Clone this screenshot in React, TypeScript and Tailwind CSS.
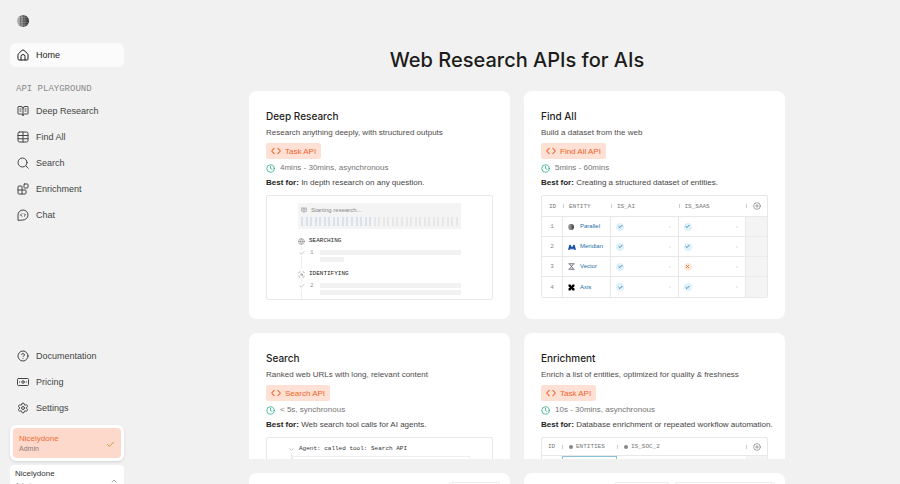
import type { ReactNode } from "react";
import {
  Blocks,
  BookOpenText,
  Check,
  ChevronDown,
  ChevronUp,
  CircleHelp,
  CirclePlus,
  Clock,
  Globe,
  ScanSearch,
  Settings,
  X,
} from "lucide-react";

const sans = "font-['Liberation_Sans',Arial,sans-serif]";
const mono = "font-['Liberation_Mono','Courier_New',monospace]";
const display = "font-['Inter','Liberation_Sans',sans-serif]";

// ── Icons ──

interface SvgProps {
  children: ReactNode;
  size?: number;
}

function Svg({ children, size = 12 }: SvgProps) {
  return (
    <svg
      width={size}
      height={size}
      viewBox="0 0 24 24"
      fill="none"
      stroke="currentColor"
      strokeWidth={2}
      strokeLinecap="round"
      strokeLinejoin="round"
      aria-hidden="true"
      className="shrink-0"
    >
      {children}
    </svg>
  );
}

function HomeIcon() {
  return (
    <Svg>
      <path d="M2 11.500a3 3 0 0 1 1-2.200l7-6.500a3 3 0 0 1 4 0l7 6.500a3 3 0 0 1 1 2.200V20a2 2 0 0 1-2 2H4a2 2 0 0 1-2-2z" />
      <path d="M8 22v-7a4 4 0 0 1 8 0v7" />
    </Svg>
  );
}

function TableIcon() {
  return (
    <Svg>
      <rect x="2" y="2" width="20" height="20" rx="3" />
      <path d="M2 9h20M2 15.500h20M12 2v20" />
    </Svg>
  );
}

function SearchIcon() {
  return (
    <Svg>
      <circle cx="11" cy="11" r="9" />
      <path d="m18 18 4.500 4.500" />
    </Svg>
  );
}

function ChatIcon() {
  return (
    <Svg>
      <path d="M2 22V12a10 10 0 1 1 10 10z" />
      <path d="m9.500 9.500-2.500 2.500 2.500 2.500M14.500 9.500l2.500 2.500-2.500 2.500" />
    </Svg>
  );
}

function PricingIcon() {
  return (
    <Svg>
      <rect x="1" y="5" width="22" height="14" rx="2" />
      <circle cx="12" cy="12" r="2.500" />
      <path d="M5 12h.5M18.500 12h.5" />
    </Svg>
  );
}

function CodeIcon() {
  return (
    <Svg size={10}>
      <path d="m7.500 5.500-6 6.500 6 6.500M16.500 5.500l6 6.500-6 6.500" strokeWidth={2.5} />
    </Svg>
  );
}

function Logo({ size = 12 }: { size?: number }) {
  return (
    <svg width={size} height={size} viewBox="0 0 24 24" aria-hidden="true" className="shrink-0">
      <defs>
        <linearGradient id="globe">
          <stop offset="0" stopColor="#b5b5b5" />
          <stop offset="0.5" stopColor="#7d7d7d" />
          <stop offset="1" stopColor="#222" />
        </linearGradient>
      </defs>
      <circle cx="12" cy="12" r="12" fill="url(#globe)" />
      <path d="M7 2v20M13 0v24M18 2v20" stroke="#444" strokeWidth="1" />
      <path d="M3 5h18M1 10h22M1 15h22M4 20h16" stroke="#d0d0d0" strokeWidth="1" opacity="0.5" />
    </svg>
  );
}

function MeridianLogo() {
  return (
    <svg width="8" height="8" viewBox="0 0 14 14" fill="#1d4fa8" aria-hidden="true">
      <path d="M0 12 2.500 3h2L7 8l2.500-5h2L14 12h-4L9 9l-2 3-2-3-1 3z" />
    </svg>
  );
}

function VectorLogo() {
  return (
    <svg width="7" height="7" viewBox="0 0 14 14" fill="none" stroke="#445" strokeWidth="1.500" aria-hidden="true">
      <path d="M1 1.500h12M1 12.500h12M3 2l8 10M11 2 3 12" />
    </svg>
  );
}

function AxisLogo() {
  return (
    <svg width="7" height="7" viewBox="0 0 14 14" fill="#000" aria-hidden="true">
      <path d="M1 1h4l2 3 2-3h4v4l-3 2 3 2v4H9l-2-3-2 3H1V9l3-2-3-2z" />
    </svg>
  );
}

// ── Sidebar ──

interface NavItemProps {
  icon: ReactNode;
  label: string;
  active?: boolean;
}

function NavItem({ icon, label, active }: NavItemProps) {
  return (
    <a
      href="#"
      className={`flex h-6 items-center gap-[7px] rounded-md px-[7px] text-[9px] ${
        active ? "bg-[#fbfbfb] text-[#1d1c1a]" : "text-[#444]"
      }`}
    >
      {icon}
      <span className="pt-0.5">{label}</span>
    </a>
  );
}

function Sidebar() {
  return (
    <aside className="flex h-full w-[134px] shrink-0 flex-col px-2.5">
      <a href="#" aria-label="Home page" className="mt-[15px] ml-[7px] self-start">
        <Logo />
      </a>

      <nav className="mt-4 flex flex-col gap-0.5">
        <NavItem icon={<HomeIcon />} label="Home" active />
        <h2 className={`mt-3.5 mb-0.5 px-[6px] text-[9px] leading-3 text-[#8a8a8a] ${mono}`}>
          API PLAYGROUND
        </h2>
        <NavItem icon={<BookOpenText size={12} />} label="Deep Research" />
        <NavItem icon={<TableIcon />} label="Find All" />
        <NavItem icon={<SearchIcon />} label="Search" />
        <NavItem icon={<Blocks size={12} />} label="Enrichment" />
        <NavItem icon={<ChatIcon />} label="Chat" />
      </nav>

      <nav className="mt-auto flex flex-col gap-0.5">
        <NavItem icon={<CircleHelp size={12} />} label="Documentation" />
        <NavItem icon={<PricingIcon />} label="Pricing" />
        <NavItem icon={<Settings size={12} />} label="Settings" />
      </nav>

      <div className="mt-[5px] rounded-md bg-white p-[3px] shadow">
        <button
          type="button"
          className="flex w-full items-center justify-between rounded bg-[#fdd9cc] px-1.5 pt-1.5 pb-1 text-left"
        >
          <span className="flex flex-col">
            <span className="text-[8px] leading-[10px] text-[#ee6b33]">Nicelydone</span>
            <span className="text-[7px] leading-[10px] text-[#8d7b76]">Admin</span>
          </span>
          <Check size={9} strokeWidth={2.5} className="text-[#c98a2e]" />
        </button>
      </div>

      {/* account switcher runs past the bottom edge */}
      <button
        type="button"
        className="mt-1 -mb-[13px] flex shrink-0 items-center justify-between rounded bg-white px-[5px] py-1 text-left"
      >
        <span className="flex flex-col">
          <span className="text-[8px] leading-[10px] text-[#333]">Nicelydone</span>
          <span className="text-[7px] leading-[14px] text-[#8a8a8a]">Admin</span>
        </span>
        <ChevronUp size={8} className="mr-px text-[#777]" />
      </button>
    </aside>
  );
}

// ── Cards ──

interface ApiCardProps {
  title: string;
  description: string;
  api: string;
  time: string;
  bestFor: string;
  clipped?: boolean;
  children: ReactNode;
}

function ApiCard({ title, description, api, time, bestFor, clipped, children }: ApiCardProps) {
  return (
    <article
      className={`bg-white px-[17px] pt-4 ${
        clipped ? "max-h-[126px] overflow-hidden rounded-t-lg" : "rounded-lg pb-[19px]"
      }`}
    >
      <h2 className={`text-[10px] leading-[18px] font-medium text-[#1d1c1a] ${display}`}>{title}</h2>
      <p className="mt-0.5 text-[8px] leading-3 text-[#504c4b]">{description}</p>
      <a
        href="#"
        className="mt-1 flex h-4 w-fit items-center gap-1 rounded-xs bg-[#fee0d5] px-[5px] text-[8px] text-[#f0652b]"
      >
        <CodeIcon />
        <span className="pt-px">{api}</span>
      </a>
      <p className="mt-[3px] flex items-center gap-[5px] text-[8px] leading-3 text-[#757575]">
        <Clock size={9} className="text-[#1fa97c]" />
        {time}
      </p>
      <p className="mt-[3px] text-[8px] leading-3 whitespace-nowrap text-[#454545]">
        <b className="text-[#1d1c1a]">Best for:</b> {bestFor}
      </p>
      <div className="mt-1.5 max-h-[105px] overflow-hidden rounded-xs border border-[#e8e8e8]">
        {children}
      </div>
    </article>
  );
}

interface ResearchStepProps {
  icon: ReactNode;
  label: string;
  num: number;
  short?: boolean;
}

function ResearchStep({ icon, label, num, short }: ResearchStepProps) {
  return (
    <div className="h-[33px]">
      <div className={`flex items-center gap-1 text-[6px] leading-[10px] text-[#222] ${mono}`}>
        <span className="text-[#888]">{icon}</span>
        {label}
      </div>
      <div className="ml-[3px] flex border-l border-[#eee] pt-1 pb-1.5">
        <Check size={6} className="-ml-[3px] bg-white text-[#888]" />
        <span className={`ml-[5px] w-2.5 text-[6px] leading-[6px] text-[#999] ${mono}`}>{num}</span>
        <div className="flex flex-1 flex-col gap-0.5">
          <div className="h-[5px] bg-[#f2f2f2]" />
          <div className={`h-[5px] bg-[#f2f2f2] ${short ? "w-1/6" : ""}`} />
        </div>
      </div>
    </div>
  );
}

function ResearchPreview() {
  return (
    <div className="px-[31px] pt-[7px] pb-px">
      <div className="bg-[#f4f4f4] p-[3px]">
        <div className="flex items-center gap-1 text-[6px] leading-2 text-[#888]">
          <BookOpenText size={6} />
          Starting research...
        </div>
        <div className="mt-[3px] flex h-[9px] justify-between">
          {Array.from({ length: 35 }, (_, i) => (
            <span key={i} className={`w-0.5 ${i < 16 ? "bg-[#d9e2ea]" : "bg-[#e7e7e7]"}`} />
          ))}
        </div>
      </div>
      <div className="mt-[7px]">
        <ResearchStep icon={<Globe size={7} />} label="SEARCHING" num={1} short />
        <ResearchStep icon={<ScanSearch size={7} />} label="IDENTIFYING" num={2} />
      </div>
    </div>
  );
}

const entities = [
  { id: 1, name: "Parallel", logo: <Logo size={6} />, ai: true, saas: true },
  { id: 2, name: "Meridian", logo: <MeridianLogo />, ai: true, saas: true },
  { id: 3, name: "Vector", logo: <VectorLogo />, ai: true, saas: false },
  { id: 4, name: "Axis", logo: <AxisLogo />, ai: true, saas: true },
];

function Flag({ ok }: { ok: boolean }) {
  return (
    <div className="flex items-center justify-between pr-[7px] pl-[5px]">
      <span
        className={`flex size-2 items-center justify-center rounded-full ${
          ok ? "bg-[#dff1fb] text-[#1f6f9f]" : "bg-[#fdeadf] text-[#e2672b]"
        }`}
      >
        {ok ? <Check size={5} strokeWidth={4} /> : <X size={5} strokeWidth={4} />}
      </span>
      <span className="size-0.5 bg-[#ececec]" />
    </div>
  );
}

function FindAllPreview() {
  const head = "border-b border-[#e8e8e8] p-0 text-left font-normal";
  const headLabel = "flex h-1 items-center border-l border-[#ccc] pl-[5px]";
  const cell = "border-r border-b border-[#e8e8e8] p-0 group-last:border-b-0";

  return (
    <table className="w-full table-fixed border-separate border-spacing-0 text-[6px]">
      <colgroup>
        <col className="w-[21px]" />
        <col className="w-12" />
        <col />
        <col />
        <col className="w-[21px]" />
      </colgroup>
      <thead className={`text-[#777] ${mono}`}>
        <tr className="h-[21px]">
          <th className={head}>
            <span className="flex h-1 items-center pl-[7px]">ID</span>
          </th>
          <th className={head}>
            <span className={headLabel}>ENTITY</span>
          </th>
          <th className={head}>
            <span className={headLabel}>IS_AI</span>
          </th>
          <th className={head}>
            <span className={headLabel}>IS_SAAS</span>
          </th>
          <th className={head}>
            <span className="flex h-1 items-center justify-center border-l border-[#ccc]">
              <CirclePlus size={8} className="shrink-0" />
            </span>
          </th>
        </tr>
      </thead>
      <tbody>
        {entities.map((row) => (
          <tr key={row.id} className="group h-5">
            <td className={`${cell} text-center text-[#888] ${mono}`}>{row.id}</td>
            <td className={cell}>
              <a href="#" className="flex items-center text-[#1d6fa5]">
                <span className="ml-[5px] flex w-3 items-center">{row.logo}</span>
                {row.name}
              </a>
            </td>
            <td className={cell}>
              <Flag ok={row.ai} />
            </td>
            <td className={cell}>
              <Flag ok={row.saas} />
            </td>
            <td className="border-b border-[#ececec] bg-[#f4f4f4] p-0 group-last:border-b-0" />
          </tr>
        ))}
      </tbody>
    </table>
  );
}

function SearchPreview() {
  return (
    <div className="px-[21px] pt-1.5">
      <div className={`flex items-center gap-1 text-[6px] leading-[10px] text-[#333] ${mono}`}>
        <ChevronDown size={7} className="text-[#999]" />
        Agent: called tool: Search API
      </div>
      <div className="ml-[3px] border-l border-[#e5e5e5] pt-0.5">
        <div className="h-16 rounded-xs border border-[#eee]" />
      </div>
    </div>
  );
}

function EnrichmentPreview() {
  const dot = <span className="size-1 shrink-0 rounded-full bg-[#888]" />;

  return (
    <div>
      <div className={`flex h-[18px] items-center border-b border-[#e8e8e8] text-[6px] text-[#777] ${mono}`}>
        <span className="w-5 pl-1.5">ID</span>
        <span className="flex h-1 w-[55px] items-center gap-[3px] border-l border-[#ccc] pl-1.5">
          {dot}
          ENTITIES
        </span>
        <span className="flex h-1 flex-1 items-center gap-[3px] border-l border-[#ccc] pl-1.5">
          {dot}
          IS_SOC_2
        </span>
        <span className="flex h-1 w-[21px] items-center justify-center border-l border-[#ccc]">
          <CirclePlus size={8} className="shrink-0" />
        </span>
      </div>
      <div className="flex h-20">
        <span className="w-5" />
        <span className="w-[55px] border border-[#8cc0dc]" />
        <span className="flex-1" />
        <span className="w-[21px] bg-[#f4f4f4]" />
      </div>
    </div>
  );
}

export default function App() {
  return (
    <div className={`flex h-screen overflow-hidden bg-[#f1f1f1] ${sans}`}>
      <Sidebar />

      <main className="min-w-0 flex-1 pt-[46px]">
        <h1 className={`text-center text-[20px] leading-7 font-medium text-[#1d1c1a] ${display}`}>
          Web Research APIs for AIs
        </h1>

        <div className="mx-auto mt-[17px] grid max-w-[536px] grid-cols-2 gap-3.5">
          <ApiCard
            title="Deep Research"
            description="Research anything deeply, with structured outputs"
            api="Task API"
            time="4mins - 30mins, asynchronous"
            bestFor="In depth research on any question."
          >
            <ResearchPreview />
          </ApiCard>
          <ApiCard
            title="Find All"
            description="Build a dataset from the web"
            api="Find All API"
            time="5mins - 60mins"
            bestFor="Creating a structured dataset of entities."
          >
            <FindAllPreview />
          </ApiCard>
          <ApiCard
            title="Search"
            description="Ranked web URLs with long, relevant content"
            api="Search API"
            time="< 5s, synchronous"
            bestFor="Web search tool calls for AI agents."
            clipped
          >
            <SearchPreview />
          </ApiCard>
          <ApiCard
            title="Enrichment"
            description="Enrich a list of entities, optimized for quality & freshness"
            api="Task API"
            time="10s - 30mins, asynchronous"
            bestFor="Database enrichment or repeated workflow automation."
            clipped
          >
            <EnrichmentPreview />
          </ApiCard>

          <article className="flex h-24 justify-end rounded-t-lg bg-white px-2.5 pt-[9px]">
            <div className="w-[51px] rounded-xs border border-[#ececec]" />
          </article>
          <article className="flex h-24 justify-end gap-1.5 rounded-t-lg bg-white px-2.5 pt-[9px]">
            <div className="w-[54px] rounded-xs border border-[#ececec]" />
            <div className="w-[100px] rounded-xs border border-[#ececec]" />
          </article>
        </div>
      </main>
    </div>
  );
}
